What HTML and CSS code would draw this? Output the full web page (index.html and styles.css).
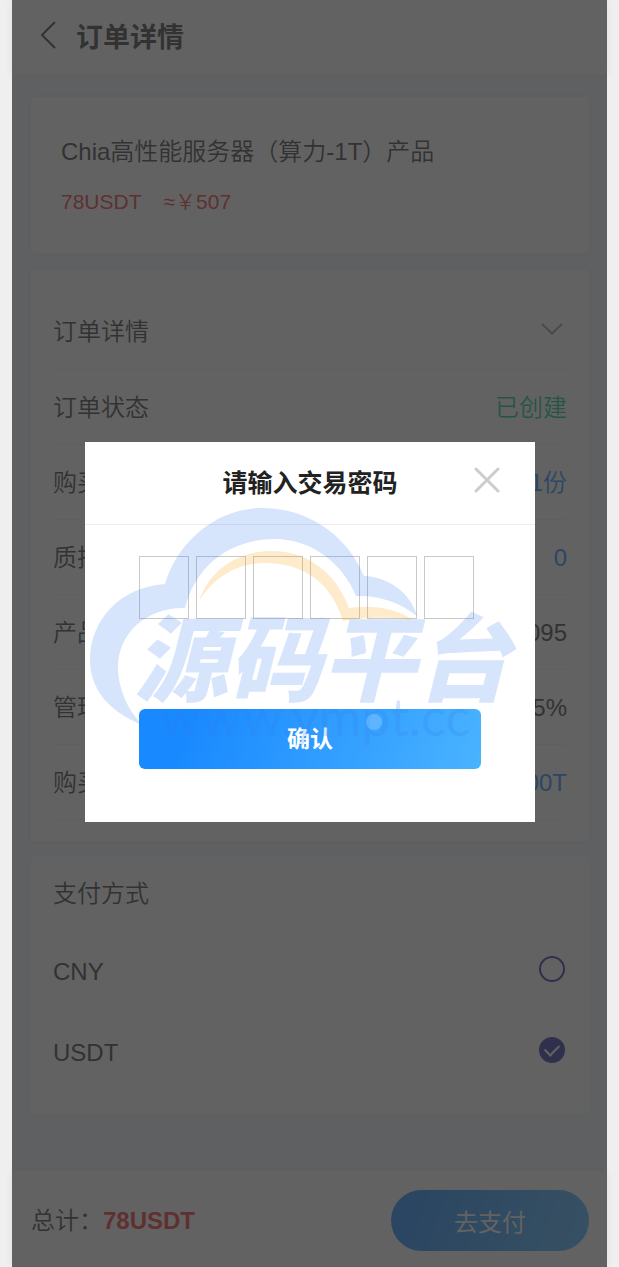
FILE: index.html
```html
<!DOCTYPE html>
<html lang="zh-CN">

<head>
    <meta charset="UTF-8">
    <meta name="viewport" content="width=device-width, initial-scale=1.0">
    <title>订单详情</title>
    <link rel="stylesheet" href="styles.css">
</head>

<body>
    <div class="page">
        <header class="nav">
            <button class="nav-back" type="button" aria-label="返回">
                <svg width="16" height="28" viewBox="0 0 16 28"><path d="M15 1L2 14L15 27" /></svg>
            </button>
            <h1 class="nav-title">订单详情</h1>
        </header>

        <main class="content">
            <section class="card product">
                <h2 class="product-name">Chia高性能服务器（算力-1T）产品</h2>
                <div class="product-price">
                    <span>78USDT</span>
                    <span>≈￥507</span>
                </div>
            </section>

            <section class="card details">
                <div class="row row-head">
                    <span>订单详情</span>
                    <svg class="chevron" width="22" height="12" viewBox="0 0 22 12"><path d="M1 1L11 10.5L21 1" /></svg>
                </div>
                <div class="row"><span>订单状态</span><span class="green">已创建</span></div>
                <div class="row"><span>购买数量</span><span class="blue">1份</span></div>
                <div class="row"><span>质押数量</span><span class="blue">0</span></div>
                <div class="row"><span>产品编号</span><span>095</span></div>
                <div class="row"><span>管理费</span><span>5%</span></div>
                <div class="row"><span>购买算力</span><span class="blue">100T</span></div>
            </section>

            <section class="card payment">
                <h2 class="payment-title">支付方式</h2>
                <label class="option">CNY <input class="radio" type="radio" name="pay"></label>
                <label class="option">USDT <input class="radio" type="radio" name="pay" checked></label>
            </section>
        </main>

        <footer class="bottom-bar">
            <div>总计：<strong class="total">78USDT</strong></div>
            <button class="pay-btn" type="button">去支付</button>
        </footer>

        <div class="overlay">
            <div class="modal" role="dialog" aria-labelledby="modal-title">
                <div class="modal-head">
                    <h2 class="modal-title" id="modal-title">请输入交易密码</h2>
                    <button class="modal-close" type="button" aria-label="关闭">
                        <svg width="26" height="26" viewBox="0 0 26 26"><path d="M2 2L24 24M24 2L2 24" /></svg>
                    </button>
                </div>
                <form class="modal-body">
                    <div class="code">
                        <input class="code-box" type="password" maxlength="1" aria-label="第1位">
                        <input class="code-box" type="password" maxlength="1" aria-label="第2位">
                        <input class="code-box" type="password" maxlength="1" aria-label="第3位">
                        <input class="code-box" type="password" maxlength="1" aria-label="第4位">
                        <input class="code-box" type="password" maxlength="1" aria-label="第5位">
                        <input class="code-box" type="password" maxlength="1" aria-label="第6位">
                    </div>
                    <button class="confirm-btn" type="button">确认</button>
                </form>

                <!-- watermark -->
                <svg class="watermark" viewBox="85 442 450 380">
                    <path class="cloud" d="M143 725C108 712 90 688 90 660C90 620 120 587 165 584C176 545 214 508 262 508C306 508 346 533 364 576C388 577 410 592 417 616C400 602 378 595 356 596C343 564 312 539 275 539C230 539 196 565 185 608C146 607 118 634 118 667C118 690 129 712 143 725Z" />
                    <path class="sun" d="M199 601C210 568 240 551 272 551C308 551 336 573 349 608C370 605 394 607 413 620C390 616 366 617 343 621C332 585 306 563 265 563C236 563 214 578 199 601Z" />
                    <text class="brand" x="134" y="694">源码平台</text>
                    <text class="site" x="160" y="736">www.ympt.cc</text>
                    <circle class="dot" cx="374" cy="722" r="8" />
                </svg>
            </div>
        </div>
    </div>
</body>

</html>
```
FILE: styles.css
```css
* {
    box-sizing: border-box;
}

body {
    margin: 0;
    background: #efefef;
    color: #333;
    font-family: "Liberation Sans", "Noto Sans CJK SC", sans-serif;
    font-size: 24px;
    font-weight: 350;
    line-height: 36px;
}

h1,
h2 {
    margin: 0;
    font-size: 24px;
    font-weight: 350;
}

button {
    padding: 0;
    border: 0;
    background: none;
    font-family: inherit;
    cursor: pointer;
}

svg {
    display: block;
    fill: none;
}

.page {
    position: relative;
    display: flex;
    flex-direction: column;
    min-height: 100vh;
    margin: 0 12px;
    background: #f2f6fe;
}

/* top bar */
.nav {
    display: flex;
    align-items: center;
    gap: 20px;
    height: 75px;
    padding: 0 28px;
    background: #fff;
    box-shadow: 0 0 8px rgba(0, 0, 0, 0.06);
}

.nav-back {
    margin-bottom: 6px;
    stroke: #333;
    stroke-width: 2;
}

.nav-title {
    font-size: 27px;
    font-weight: bold;
}

/* cards */
.content {
    display: flex;
    flex-direction: column;
    gap: 16px;
    padding: 22px 18px 24px 19px;
}

.card {
    padding: 0 22px;
    border-radius: 4px;
    background: #fff;
}

.product,
.details {
    box-shadow: 0 0 10px rgba(0, 0, 0, 0.06);
}

.product {
    padding: 37px 30px 33px;
}

.product-price {
    display: flex;
    gap: 22px;
    margin-top: 14px;
    color: #ee2a2a;
    font-size: 21px;
}

.details {
    padding-bottom: 21px;
}

.row {
    display: flex;
    align-items: center;
    justify-content: space-between;
    height: 75px;
    padding-top: 2px;
    border-bottom: 1px solid #f3f3f3;
}

.row-head {
    height: 101px;
    padding-top: 26px;
}

.chevron {
    margin: 0 4px 6px 0;
    stroke: #999;
    stroke-width: 2;
}

.green {
    color: #00c88a;
}

.blue {
    color: #1989fa;
}

.payment {
    padding-bottom: 21px;
}

.payment-title {
    padding: 19px 0;
}

.option {
    display: flex;
    align-items: center;
    justify-content: space-between;
    height: 81px;
}

.radio {
    appearance: none;
    width: 26px;
    height: 26px;
    margin: 0 2px 6px 0;
    border: 2px solid #2e2aa0;
    border-radius: 50%;
}

.radio:checked {
    display: grid;
    place-items: center;
    background: #2e2aa0;
}

.radio:checked::before {
    content: "";
    width: 12px;
    height: 7px;
    margin-bottom: 3px;
    border: solid #fff;
    border-width: 0 0 2px 2px;
    transform: rotate(-45deg);
}

/* footer */
.bottom-bar {
    display: flex;
    align-items: center;
    justify-content: space-between;
    margin-top: auto;
    padding: 19px 18px 16px 19px;
    background: #fff;
    box-shadow: 0 0 8px rgba(0, 0, 0, 0.06);
}

.total {
    color: #ee2a2a;
    font-weight: bold;
}

.pay-btn {
    width: 198px;
    height: 61px;
    border-radius: 31px;
    background: linear-gradient(110deg, #1989ff 15%, #4ab3ff);
    color: #fff;
    font-size: 24px;
}

/* password dialog */
.overlay {
    position: absolute;
    inset: 0;
    display: flex;
    align-items: center;
    padding: 0 72px 3px 73px;
    background: rgba(50, 50, 50, 0.765);
}

.modal {
    position: relative;
    flex: 1;
    background: #fff;
}

.modal-head {
    display: grid;
    grid-template-columns: 1fr auto 1fr;
    align-items: center;
    height: 83px;
    border-bottom: 1px solid #eee;
}

.modal-title {
    grid-column: 2;
    color: #222;
    font-size: 25px;
    font-weight: bold;
}

.modal-close {
    justify-self: end;
    margin: 0 35px 6px 0;
    stroke: #ccc;
    stroke-width: 3;
    stroke-linecap: round;
}

.modal-body {
    padding: 31px 54px 53px;
}

.code {
    display: flex;
    gap: 7px;
}

.code-box {
    width: 50px;
    height: 63px;
    padding: 0;
    border: 1px solid #c8c8c8;
    border-radius: 0;
    background: #fff;
    font-size: 24px;
    text-align: center;
}

.confirm-btn {
    display: block;
    width: 100%;
    height: 60px;
    margin-top: 90px;
    padding-bottom: 4px;
    border-radius: 6px;
    background: linear-gradient(110deg, #1989ff 15%, #4ab3ff);
    color: #fff;
    font-size: 23px;
    font-weight: bold;
}

.watermark {
    position: absolute;
    inset: 0;
    width: 100%;
    height: 100%;
    pointer-events: none;
}

.cloud,
.brand,
.site {
    fill: rgba(50, 125, 235, 0.2);
}

.sun {
    fill: rgba(250, 155, 0, 0.2);
}

.dot {
    fill: rgba(255, 255, 255, 0.2);
}

.brand {
    font-family: "Noto Sans CJK SC", sans-serif;
    font-size: 94px;
    font-style: italic;
    font-weight: 900;
}

.site {
    font-family: Lato, sans-serif;
    font-size: 52px;
    font-weight: 400;
}
```
